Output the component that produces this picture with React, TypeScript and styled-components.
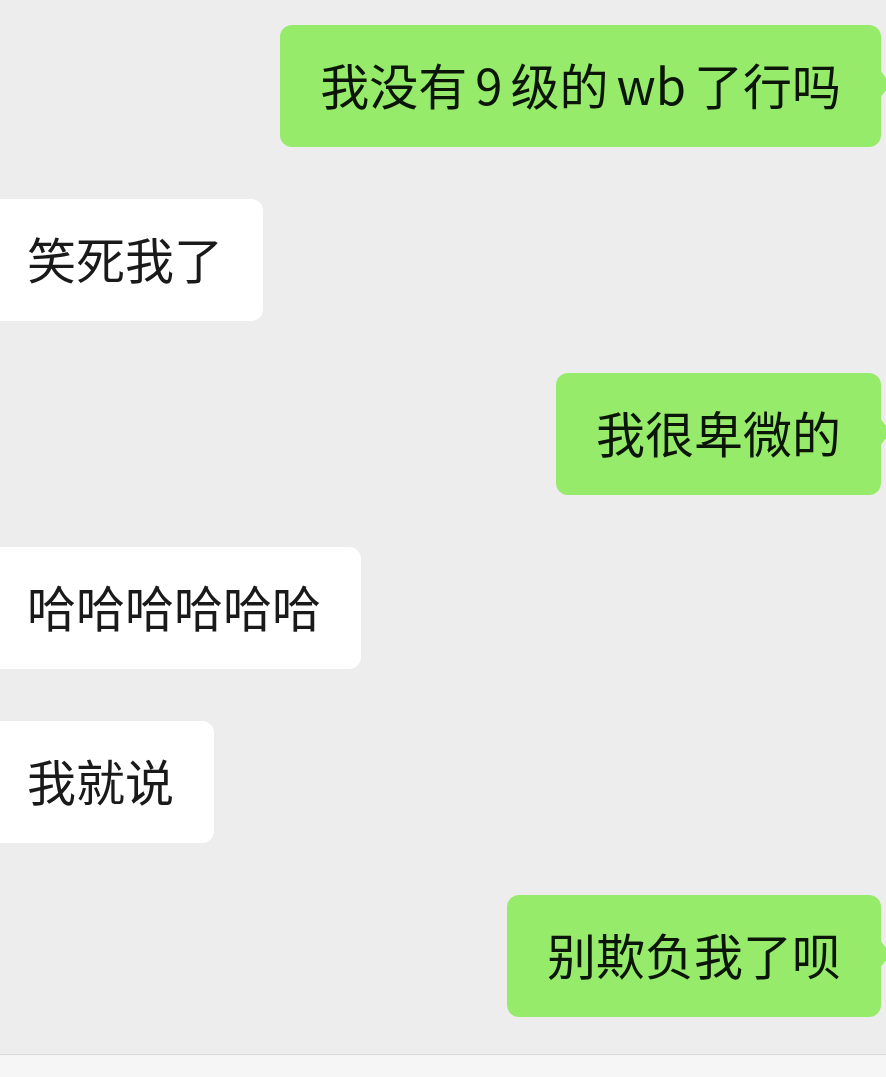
import { FC } from 'react';
import styled, { createGlobalStyle } from 'styled-components';

const GlobalStyle = createGlobalStyle`
  html, body {
    margin: 0;
    padding: 0;
    background: #ededed;
    overflow: hidden;
  }
  * {
    box-sizing: border-box;
  }
`;

const ChatPage = styled.div`
  width: 100%;
  height: 100vh;
  display: flex;
  flex-direction: column;
  background-color: #ededed;
  font-family: 'Noto Sans CJK SC', 'Noto Sans', sans-serif;
  overflow: hidden;
`;

const MessageList = styled.div`
  flex: 1;
  display: flex;
  flex-direction: column;
  gap: 52px;
  padding: 25px 5px 0 0;
`;

const Row = styled.div<{ $self: boolean }>`
  display: flex;
  justify-content: ${(p) => (p.$self ? 'flex-end' : 'flex-start')};
`;

const Bubble = styled.div<{ $self: boolean }>`
  position: relative;
  height: 122px;
  padding: 0 40px 5px;
  display: flex;
  align-items: center;
  border-radius: 12px;
  font-size: 49px;
  line-height: 1;
  word-spacing: -3px;
  white-space: nowrap;
  color: ${(p) => (p.$self ? '#0c1608' : '#1a1a1a')};
  background-color: ${(p) => (p.$self ? '#97eb6b' : '#ffffff')};
  margin-left: ${(p) => (p.$self ? '0' : '-13px')};

  &::after {
    content: '';
    display: ${(p) => (p.$self ? 'block' : 'none')};
    position: absolute;
    right: -10px;
    top: 45px;
    border-top: 14px solid transparent;
    border-bottom: 14px solid transparent;
    border-left: 11px solid #97eb6b;
  }
`;

const InputBar = styled.div`
  height: 23px;
  border-top: 1px solid #d8d8d8;
  background-color: #f6f6f6;
`;

const messages = [
  { self: true, text: '我没有 9 级的 wb 了行吗' },
  { self: false, text: '笑死我了' },
  { self: true, text: '我很卑微的' },
  { self: false, text: '哈哈哈哈哈哈' },
  { self: false, text: '我就说' },
  { self: true, text: '别欺负我了呗' },
];

const App: FC = () => {
  return (
    <>
      <GlobalStyle />
      <ChatPage>
        <MessageList>
          {messages.map((m, i) => (
            <Row key={i} $self={m.self}>
              <Bubble $self={m.self}>{m.text}</Bubble>
            </Row>
          ))}
        </MessageList>
        <InputBar />
      </ChatPage>
    </>
  );
};

export default App;
